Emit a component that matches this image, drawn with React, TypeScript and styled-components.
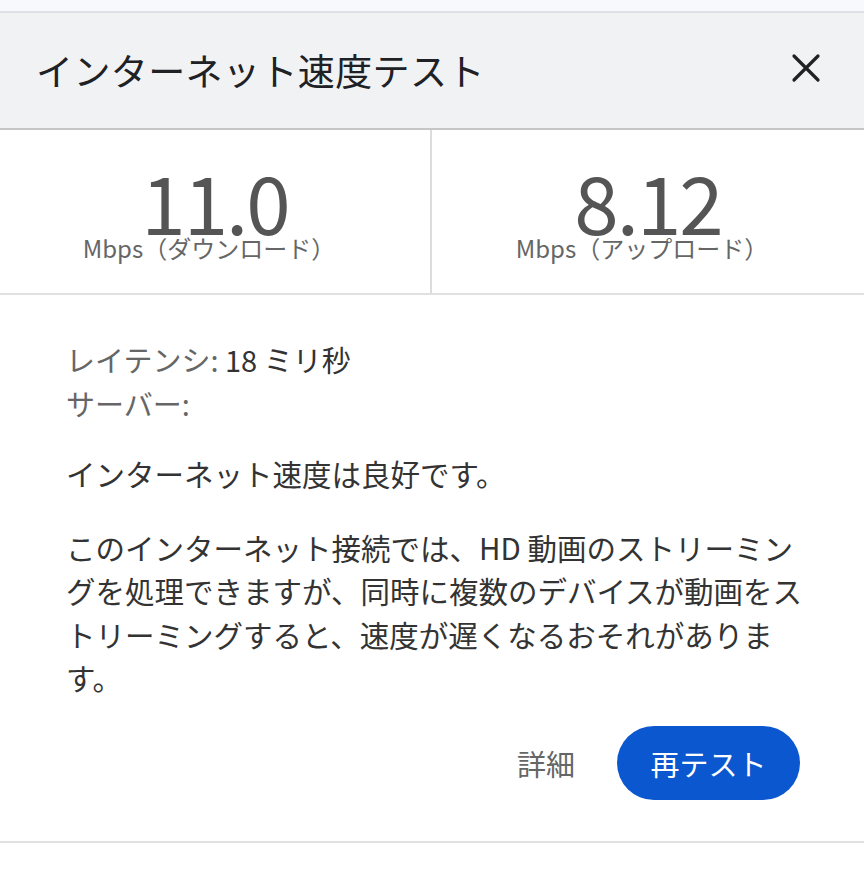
import React from "react";
import styled, { createGlobalStyle } from "styled-components";

const GlobalStyle = createGlobalStyle`
  html, body {
    margin: 0;
    padding: 0;
    background: #ffffff;
  }
  body {
    font-family: "Noto Sans CJK JP", "Noto Sans", sans-serif;
    color: #333333;
  }
`;

const Page = styled.div`
  width: 864px;
  min-height: 875px;
  background: #ffffff;
`;

const TopStrip = styled.div`
  height: 11px;
  background: #f8f9fc;
  border-bottom: 2px solid #dde0e6;
`;

const Header = styled.header`
  display: flex;
  align-items: center;
  justify-content: space-between;
  height: 115px;
  padding: 0 40px 0 36px;
  background: #f1f2f4;
  border-bottom: 2px solid #c6c6c6;
`;

const Title = styled.h1`
  margin: 0;
  font-size: 37px;
  font-weight: 400;
  color: #202124;
  line-height: 1;
  letter-spacing: 0.4px;
`;

const CloseButton = styled.button`
  display: flex;
  align-items: center;
  justify-content: center;
  width: 36px;
  height: 36px;
  margin-top: -6px;
  padding: 0;
  border: none;
  background: transparent;
  cursor: pointer;
`;

const Stats = styled.section`
  display: grid;
  grid-template-columns: 432px 1fr;
  border-bottom: 2px solid #e0e0e0;
`;

const StatCell = styled.div<{ $divider?: boolean }>`
  display: flex;
  flex-direction: column;
  align-items: center;
  height: 163px;
  padding-top: 38px;
  box-sizing: border-box;
  border-right: ${(p) => (p.$divider ? "2px solid #dcdcdc" : "none")};
`;

const StatValue = styled.div`
  font-size: 80px;
  line-height: 64px;
  color: #555555;
  letter-spacing: -2px;
`;

const StatUnit = styled.div`
  margin-top: 0;
  margin-right: 12px;
  font-size: 24px;
  line-height: 32px;
  color: #666666;
`;

const Body = styled.section`
  padding: 43px 50px 41px 66px;
  border-bottom: 2px solid #e0e0e0;
`;

const InfoLine = styled.div`
  font-size: 29px;
  line-height: 43.5px;
  color: #666666;
`;

const InfoValue = styled.span`
  color: #333333;
`;

const Paragraph = styled.p<{ $gap: number }>`
  margin: ${(p) => p.$gap}px 0 0;
  font-size: 29.5px;
  line-height: 43.5px;
  color: #333333;
  line-break: strict;
`;

const Actions = styled.div`
  display: flex;
  align-items: center;
  justify-content: flex-end;
  gap: 42px;
  margin-top: 26px;
  padding-right: 14px;
`;

const TextButton = styled.button`
  padding: 0;
  border: none;
  background: transparent;
  font-family: inherit;
  font-size: 29px;
  color: #666666;
  cursor: pointer;
`;

const PrimaryButton = styled.button`
  width: 183px;
  height: 74px;
  border: none;
  border-radius: 37px;
  background: #0b57d0;
  color: #ffffff;
  font-family: inherit;
  font-size: 29px;
  cursor: pointer;
`;

const CloseIcon = () => (
  <svg width="30" height="30" viewBox="0 0 30 30" aria-hidden="true">
    <path d="M3 3 L27 27 M27 3 L3 27" stroke="#202124" strokeWidth="3.2" strokeLinecap="round" />
  </svg>
);

export default function App() {
  return (
    <Page>
      <GlobalStyle />
      <TopStrip />
      <Header>
        <Title>インターネット速度テスト</Title>
        <CloseButton aria-label="閉じる">
          <CloseIcon />
        </CloseButton>
      </Header>
      <Stats>
        <StatCell $divider>
          <StatValue>11.0</StatValue>
          <StatUnit>Mbps（ダウンロード）</StatUnit>
        </StatCell>
        <StatCell>
          <StatValue>8.12</StatValue>
          <StatUnit>Mbps（アップロード）</StatUnit>
        </StatCell>
      </Stats>
      <Body>
        <InfoLine>
          レイテンシ: <InfoValue>18 ミリ秒</InfoValue>
        </InfoLine>
        <InfoLine>サーバー:</InfoLine>
        <Paragraph $gap={27}>インターネット速度は良好です。</Paragraph>
        <Paragraph $gap={30}>
          このインターネット接続では、HD 動画のストリーミングを処理できますが、同時に複数のデバイスが動画をストリーミングすると、速度が遅くなるおそれがあります。
        </Paragraph>
        <Actions>
          <TextButton>詳細</TextButton>
          <PrimaryButton>再テスト</PrimaryButton>
        </Actions>
      </Body>
    </Page>
  );
}
